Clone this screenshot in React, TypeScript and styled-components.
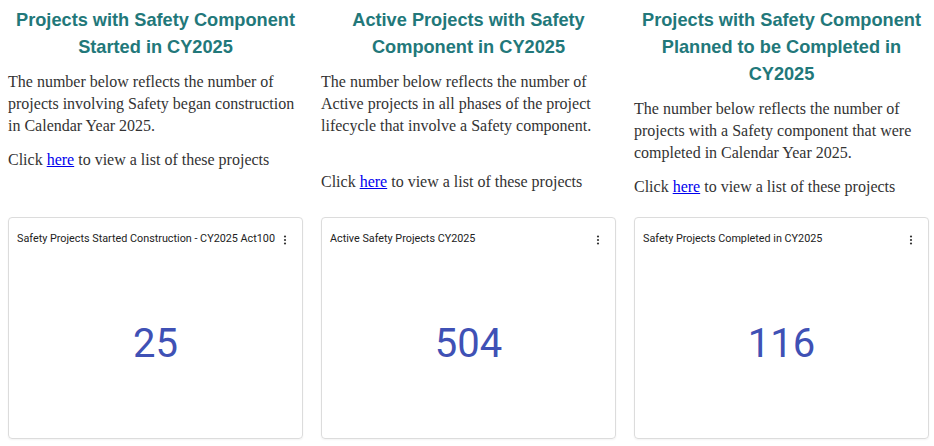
import React from 'react';
import styled, { createGlobalStyle } from 'styled-components';

type Stat = {
	heading: string;
	text: string;
	extraGap?: boolean;
	cardTitle: string;
	value: number;
};

const stats: Stat[] = [
	{
		heading: 'Projects with Safety Component Started in CY2025',
		text: 'The number below reflects the number of projects involving Safety began construction in Calendar Year 2025.',
		cardTitle: 'Safety Projects Started Construction - CY2025 Act100',
		value: 25,
	},
	{
		heading: 'Active Projects with Safety Component in CY2025',
		text: 'The number below reflects the number of Active projects in all phases of the project lifecycle that involve a Safety component.',
		extraGap: true,
		cardTitle: 'Active Safety Projects CY2025',
		value: 504,
	},
	{
		heading: 'Projects with Safety Component Planned to be Completed in CY2025',
		text: 'The number below reflects the number of projects with a Safety component that were completed in Calendar Year 2025.',
		cardTitle: 'Safety Projects Completed in CY2025',
		value: 116,
	},
];

function KebabIcon() {
	return (
		<svg width="12" height="12" viewBox="0 0 24 24" fill="currentColor">
			<circle cx="12" cy="5" r="2.2" />
			<circle cx="12" cy="12" r="2.2" />
			<circle cx="12" cy="19" r="2.2" />
		</svg>
	);
}

function App() {
	return (
		<>
			<GlobalStyle />
			<Grid>
				{stats.map((s) => (
					<Column key={s.cardTitle}>
						<Intro>
							<Heading>{s.heading}</Heading>
							<Body>{s.text}</Body>
							<Body $gap={s.extraGap}>
								Click <a href="#">here</a> to view a list of these projects
							</Body>
						</Intro>
						<Card>
							<CardHeader>
								<CardTitle>{s.cardTitle}</CardTitle>
								<MenuButton>
									<KebabIcon />
								</MenuButton>
							</CardHeader>
							<CardBody>
								<BigNumber>{s.value}</BigNumber>
							</CardBody>
						</Card>
					</Column>
				))}
			</Grid>
		</>
	);
}

const GlobalStyle = createGlobalStyle`
	body {
		margin: 0;
		background: #fff;
	}
`;

const Grid = styled.div`
	display: grid;
	grid-template-columns: repeat(3, 295px);
	column-gap: 18px;
	padding: 0 7px 0 8px;
	height: 446px;
	box-sizing: border-box;
`;

const Column = styled.section`
	display: flex;
	flex-direction: column;
	padding-bottom: 7px;
`;

const Intro = styled.div`
	flex: 1;
`;

const Heading = styled.h2`
	margin: 7px 0 0;
	font-family: 'Liberation Sans', Arial, sans-serif;
	font-size: 18.2px;
	line-height: 27px;
	font-weight: 700;
	text-align: center;
	color: #22787a;
`;

const Body = styled.p<{ $gap?: boolean }>`
	margin: ${(p) => (p.$gap ? '34px' : '12px')} 0 0;
	font-family: 'Liberation Serif', Georgia, serif;
	font-size: 16px;
	line-height: 22px;
	color: #333;
	&:first-of-type {
		margin-top: 10px;
	}
	a {
		color: #0000ee;
	}
`;

const Card = styled.div`
	height: 222px;
	border: 1px solid #dcdcdc;
	border-radius: 4px;
	box-shadow: 0 1px 2px rgba(0, 0, 0, 0.05);
	display: flex;
	flex-direction: column;
	box-sizing: border-box;
`;

const CardHeader = styled.div`
	display: flex;
	align-items: flex-start;
	justify-content: space-between;
	padding: 14px 11px 0 8px;
	height: 30px;
	box-sizing: border-box;
`;

const CardTitle = styled.div`
	font-family: Roboto, 'Liberation Sans', sans-serif;
	font-size: 10.8px;
	line-height: 14px;
	color: #222;
`;

const MenuButton = styled.span`
	display: flex;
	color: #333;
	margin-top: 2px;
`;

const CardBody = styled.div`
	flex: 1;
	display: flex;
	align-items: center;
	justify-content: center;
`;

const BigNumber = styled.div`
	font-family: Roboto, 'Liberation Sans', sans-serif;
	font-size: 40px;
	color: #3f51b5;
`;

export default App;
